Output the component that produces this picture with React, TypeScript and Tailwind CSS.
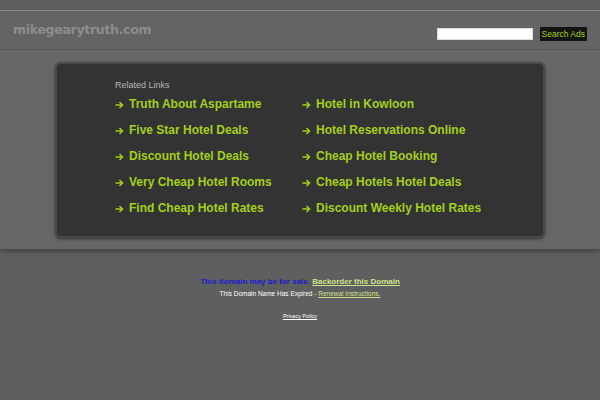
const leftLinks = [
  "Truth About Aspartame",
  "Five Star Hotel Deals",
  "Discount Hotel Deals",
  "Very Cheap Hotel Rooms",
  "Find Cheap Hotel Rates",
];

const rightLinks = [
  "Hotel in Kowloon",
  "Hotel Reservations Online",
  "Cheap Hotel Booking",
  "Cheap Hotels Hotel Deals",
  "Discount Weekly Hotel Rates",
];

function LinkItem({ label }: { label: string }) {
  return (
    <a href="#" className="flex items-center h-[26px] text-[12px] font-bold text-[#a3cf1d] whitespace-nowrap">
      <svg width="9" height="8" viewBox="0 0 9 8" className="mr-[5px] mt-[1px]" fill="none" stroke="currentColor" strokeWidth="1.5">
        <path d="M0.5 4h7" />
        <path d="M4.5 1l3 3-3 3" />
      </svg>
      {label}
    </a>
  );
}

export default function App() {
  return (
    <div className="w-[600px] h-[400px] bg-[#5f5f5f] font-['Liberation_Sans',Arial,sans-serif] overflow-hidden">
      <div className="h-[10px] bg-[#5f5f5f]" />
      <div className="h-[1px] bg-[#8a8a8a]" />
      <div className="h-[39px] bg-[#646464] flex items-center justify-between pl-[13px] pr-[13px] border-b border-[#575757]">
        <div className="text-[12.5px] font-bold text-[#8d8d8d] font-['DejaVu_Sans',sans-serif] tracking-[-0.3px] mt-[1px]">
          mikegearytruth.com
        </div>
        <div className="flex items-center gap-[7px] mt-[8px]">
          <input className="w-[96px] h-[12px] bg-white border border-[#ddd] outline-none" />
          <button className="h-[14px] px-[2px] bg-[#141414] text-[#a3cf1d] text-[8.5px] leading-[14px]">
            Search Ads
          </button>
        </div>
      </div>
      <div className="h-[199px] bg-[#666666] pt-[12px] px-[55px] shadow-[0_3px_4px_rgba(0,0,0,0.25)] relative">
        <div className="h-[176px] rounded-[6px] bg-[#333333] border-2 border-[#4a4a4a] shadow-[0_1px_3px_rgba(0,0,0,0.5)] pl-[58px] pt-[15px]">
          <div className="text-[9px] text-[#b5b5b5] leading-[12px]">Related Links</div>
          <div className="flex">
            <div className="w-[187px] flex flex-col">
              {leftLinks.map((l) => (
                <LinkItem key={l} label={l} />
              ))}
            </div>
            <div className="flex flex-col">
              {rightLinks.map((l) => (
                <LinkItem key={l} label={l} />
              ))}
            </div>
          </div>
        </div>
      </div>
      <div className="flex flex-col items-center pt-[27px]">
        <div className="text-[8px] font-bold leading-[12px]">
          <span className="text-[#1c1ccf]">This domain may be for sale.</span>{" "}
          <a href="#" className="text-[#cfe38a] underline">
            Backorder this Domain
          </a>
        </div>
        <div className="text-[6.5px] text-white leading-[12px]">
          This Domain Name Has Expired -{" "}
          <a href="#" className="text-[#cfe38a] underline">
            Renewal Instructions.
          </a>
        </div>
        <a href="#" className="text-[5.5px] text-white underline mt-[12px]">
          Privacy Policy
        </a>
      </div>
    </div>
  );
}
